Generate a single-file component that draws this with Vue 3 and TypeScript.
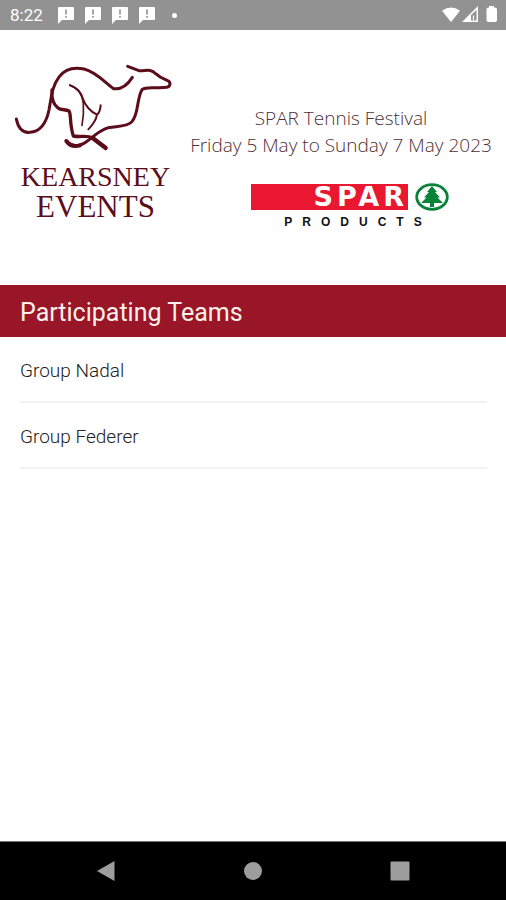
<script setup lang="ts">
interface Team {
  id: number
  name: string
}

const notifications: number[] = [1, 2, 3, 4]

const teams: Team[] = [
  { id: 1, name: 'Group Nadal' },
  { id: 2, name: 'Group Federer' },
]
</script>

<template>
  <div class="screen">
    <div class="status">
      <time class="clock">8:22</time>
      <svg v-for="n in notifications" :key="n" class="notice" viewBox="0 0 16 17" aria-hidden="true">
        <path d="M1 0H15Q16 0 16 1V12Q16 13 15 13H4L0 17V1Q0 0 1 0Z" fill="#fff" />
        <path d="M8 2.5V7.5M8 9V10.8" stroke="#929292" stroke-width="1.6" />
      </svg>
      <span class="dot"></span>
      <svg class="signals" viewBox="0 0 56 18" aria-hidden="true">
        <path d="M0 4.8Q9 -1.8 18 4.8L9 16Z" fill="#fff" />
        <path d="M36 0V16H20Z" fill="#fff" />
        <path d="M29 9L34.5 4V14.5H29Z" fill="#929292" />
        <path d="M31.5 9.5V14" stroke="#fff" stroke-width="1.2" />
        <path d="M47 1.5V0H52V1.5H53Q55 1.5 55 3.5V14Q55 16 53 16H46.5Q44.5 16 44.5 14V3.5Q44.5 1.5 46.5 1.5Z" fill="#fff" />
      </svg>
    </div>

    <header class="banner">
      <div class="host">
        <svg class="hound" viewBox="0 0 525 315" fill="none" stroke="#5c0d1b" stroke-linecap="round" stroke-linejoin="round" aria-hidden="true">
          <path d="M34 192C40 222 56 234 75 232C105 230 124 203 132 165C140 120 142 92 163 65C180 42 208 36 237 42C274 51 300 83 326 101C350 104 370 86 382 67" stroke-width="9" />
          <path d="M141 105C139 130 144 147 158 158C168 167 181 162 192 168C199 178 193 205 205 243C227 248 246 239 262 249L301 277" stroke-width="10" />
          <path d="M263 249L302 279" stroke-width="13" />
          <path d="M184 258C194 273 218 276 235 266C258 253 276 229 310 218C338 213 364 216 380 201C402 179 394 132 411 104C424 92 456 102 485 97C496 94 498 84 490 78C474 71 466 69 452 56C436 39 420 49 402 47L368 34" stroke-width="9" />
          <path d="M184 258C193 271 207 276 225 271" stroke-width="12" />
          <path d="M194 90C220 99 233 119 235 145C237 171 235 190 231 211" stroke-width="5" />
          <path d="M195 91C215 98 228 112 233 130C242 155 258 170 276 179C283 173 286 163 287 151M276 179C273 197 263 210 250 223" stroke-width="6" />
        </svg>
        <div class="host-name">
          <span class="host-first">KEARSNEY</span>
          <span class="host-second">EVENTS</span>
        </div>
      </div>

      <div class="event">
        <h1 class="event-title">SPAR Tennis Festival<br />Friday 5 May to Sunday 7 May 2023</h1>
        <div class="sponsor">
          <div class="sponsor-row">
            <span class="spar">SPAR</span>
            <svg class="tree" viewBox="0 0 34 28" aria-hidden="true">
              <ellipse cx="17" cy="14" rx="15.3" ry="12.3" fill="#fff" stroke="#078239" stroke-width="2.8" />
              <path d="M17 3L22 9H20L25 14.5H22.5L28 20H19V24H15V20H6L11.5 14.5H9L14 9H12Z" fill="#078239" />
            </svg>
          </div>
          <span class="products">PRODUCTS</span>
        </div>
      </div>
    </header>

    <main class="content">
      <h2 class="heading">Participating Teams</h2>
      <ul class="teams">
        <li v-for="team in teams" :key="team.id">
          <a class="team" href="#">{{ team.name }}</a>
        </li>
      </ul>
    </main>

    <nav class="navbar">
      <button class="key" type="button" aria-label="Back">
        <svg viewBox="0 0 20 22"><path d="M18.5 1V21L1 11Z" fill="#9d9d9d" /></svg>
      </button>
      <button class="key" type="button" aria-label="Home">
        <svg viewBox="0 0 20 22"><circle cx="10" cy="11" r="9" fill="#9d9d9d" /></svg>
      </button>
      <button class="key" type="button" aria-label="Recent apps">
        <svg viewBox="0 0 20 22"><rect x="0.5" y="1.5" width="19" height="19" rx="1" fill="#9d9d9d" /></svg>
      </button>
    </nav>
  </div>
</template>

<style>
body {
  margin: 0;
  background: #fff;
}
</style>

<style scoped>
.screen {
  display: flex;
  flex-direction: column;
  min-height: 100vh;
  background: #fff;
  color: #2b2b2b;
  font-family: Roboto, "Liberation Sans", sans-serif;
}

.status {
  display: flex;
  align-items: center;
  gap: 11px;
  box-sizing: border-box;
  height: 30px;
  padding: 0 8px 0 10px;
  background: #929292;
  color: #fff;
}

.clock {
  margin-right: 4px;
  font-size: 17px;
  line-height: 30px;
}

.notice {
  width: 16px;
  height: 17px;
}

.dot {
  width: 5px;
  height: 5px;
  margin-left: 6px;
  border-radius: 50%;
  background: #fff;
}

.signals {
  width: 56px;
  height: 18px;
  margin-left: auto;
}

.banner {
  display: flex;
  box-sizing: border-box;
  min-height: 255px;
  padding: 25px 10px 0 5px;
}

.host {
  flex: none;
  width: 175px;
}

.hound {
  display: block;
  width: 175px;
  height: 105px;
}

.host-name {
  display: flex;
  flex-direction: column;
  align-items: center;
  padding: 2px 0 0 6px;
  color: #5c0d1b;
  font-family: "Liberation Serif", serif;
  line-height: 30px;
}

.host-first {
  font-size: 28px;
}

.host-second {
  font-size: 31px;
}

.event {
  display: flex;
  flex: 1;
  flex-direction: column;
  align-items: center;
  padding: 50px 0 0 6px;
}

.event-title {
  margin: 0;
  color: #4f3036;
  font-family: "Open Sans", Lato, sans-serif;
  font-size: 19px;
  font-weight: 300;
  line-height: 27px;
  text-align: center;
  white-space: nowrap;
}

.sponsor {
  display: flex;
  flex-direction: column;
  align-items: center;
  margin-top: 24px;
  padding-left: 18px;
}

.sponsor-row {
  display: flex;
  align-items: center;
  gap: 7px;
}

.spar {
  box-sizing: border-box;
  width: 157px;
  height: 26px;
  background: #ea1730;
  color: #fff;
  font-family: "DejaVu Sans", sans-serif;
  font-size: 27px;
  font-weight: 700;
  letter-spacing: 4px;
  line-height: 26px;
  text-align: right;
}

.tree {
  width: 34px;
  height: 28px;
}

.products {
  padding: 2px 0 0 16px;
  color: #111;
  font-family: "Liberation Sans", sans-serif;
  font-size: 12px;
  font-weight: 700;
  letter-spacing: 10px;
  line-height: 18px;
}

.content {
  flex: 1;
}

.heading {
  margin: 0;
  padding: 4px 20px 0;
  background: #981627;
  color: #fff0e8;
  font-size: 25px;
  font-weight: 400;
  line-height: 48px;
}

.teams {
  margin: 0;
  padding: 0 19px 0 20px;
  list-style: none;
}

.team {
  display: block;
  padding-top: 4px;
  border-bottom: 2px solid #f2f2f2;
  color: #222;
  font-size: 19px;
  font-weight: 300;
  line-height: 60px;
  text-decoration: none;
}

.navbar {
  display: flex;
  justify-content: space-between;
  align-items: center;
  box-sizing: border-box;
  height: 59px;
  padding: 0 96px;
  border-top: 1px solid #777;
  background: #000;
}

.key {
  width: 20px;
  height: 22px;
  padding: 0;
  border: 0;
  background: none;
}

.key svg {
  display: block;
  width: 20px;
  height: 22px;
}
</style>
